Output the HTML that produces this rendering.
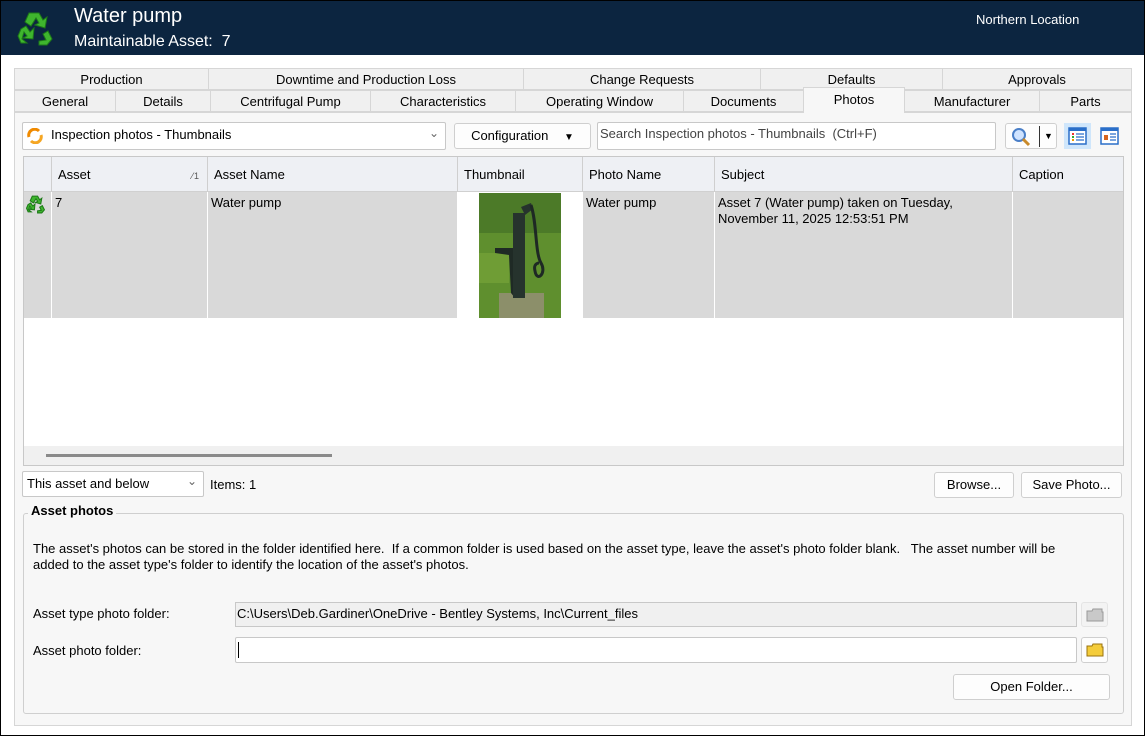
<!DOCTYPE html>
<html><head><meta charset="utf-8"><style>
*{box-sizing:border-box;margin:0;padding:0}
body{width:1145px;height:736px;overflow:hidden;background:#fff;font-family:"Liberation Sans",sans-serif;font-size:13px;color:#000;position:relative}
.a{position:absolute}
.frame{left:0;top:0;width:1145px;height:736px;border:1px solid #000}
.hdr{left:1px;top:1px;width:1143px;height:54px;background:#0c2540;color:#fff}
.tab{position:absolute;height:22px;border:1px solid #d6d6d6;background:#f0f0f0;text-align:center;line-height:21px;font-size:13px}
.panel{left:14px;top:112px;width:1118px;height:614px;background:#f7f7f7;border:1px solid #d6d6d6}
.box{position:absolute;background:#fff;border:1px solid #c8c8c8;border-radius:2px}
.btn{position:absolute;background:#fdfdfd;border:1px solid #cfcfcf;border-radius:3px;text-align:center;line-height:24px}
.th{position:absolute;top:0;height:35px;line-height:35px;padding-left:6px;border-right:1px solid #cfcfcf}
.td{position:absolute;top:35px;height:126px;padding:3px 3px;border-right:1px solid #fff;line-height:16px}
</style></head><body>
<div class="a frame"></div>
<div class="a hdr">
 <svg class="a" style="left:16px;top:8px" width="38" height="38" viewBox="0 0 38 38">
  <g fill="#3fb52e" stroke="#1d7a18" stroke-width="1">
   <path d="M12 4 L22 4 L26 11 L30 8 L28 19 L18 16 L22 14 L19 9 L14 17 L8 13 Z"/>
   <path d="M31 22 L35 30 L30 36 L22 36 L22 32 L29 31 L26 25 Z"/>
   <path d="M4 20 L9 17 L13 23 L17 19 L16 30 L6 29 L10 27 L7 23 L5 30 L10 34 L4 34 L1 27 Z"/>
  </g>
 </svg>
 <div class="a" style="left:73px;top:4px;font-size:20px">Water pump</div>
 <div class="a" style="left:73px;top:32px;font-size:16px">Maintainable Asset:&nbsp; 7</div>
 <div class="a" style="left:975px;top:11px;font-size:13px">Northern Location</div>
</div>
<div class="tab" style="left:14px;top:68px;width:195px">Production</div>
<div class="tab" style="left:208px;top:68px;width:316px">Downtime and Production Loss</div>
<div class="tab" style="left:523px;top:68px;width:238px">Change Requests</div>
<div class="tab" style="left:760px;top:68px;width:183px">Defaults</div>
<div class="tab" style="left:942px;top:68px;width:190px">Approvals</div>
<div class="tab" style="left:14px;top:90px;width:102px">General</div>
<div class="tab" style="left:115px;top:90px;width:96px">Details</div>
<div class="tab" style="left:210px;top:90px;width:161px">Centrifugal Pump</div>
<div class="tab" style="left:370px;top:90px;width:146px">Characteristics</div>
<div class="tab" style="left:515px;top:90px;width:169px">Operating Window</div>
<div class="tab" style="left:683px;top:90px;width:121px">Documents</div>
<div class="tab" style="left:904px;top:90px;width:136px">Manufacturer</div>
<div class="tab" style="left:1039px;top:90px;width:93px">Parts</div>
<div class="a panel"></div>
<div class="tab" style="left:803px;top:87px;width:102px;height:26px;background:#f7f7f7;border-bottom:none;line-height:23px">Photos</div>
<div class="box" style="left:22px;top:122px;width:424px;height:28px">
 <svg class="a" style="left:3px;top:5px" width="18" height="16" viewBox="0 0 18 16"><path d="M3 9 A6 6 0 0 1 13 3" stroke="#f08a00" stroke-width="3" fill="none"/><path d="M15 7 A6 6 0 0 1 5 13" stroke="#f5a623" stroke-width="3" fill="none"/></svg>
 <span class="a" style="left:28px;top:4px">Inspection photos - Thumbnails</span>
 <span class="a" style="right:6px;top:3px;color:#666;font-size:12px">&#8964;</span>
</div>
<div class="btn" style="left:454px;top:123px;width:137px;height:26px">Configuration <span style="font-size:10px;margin-left:12px">&#9660;</span></div>
<div class="box" style="left:597px;top:122px;width:399px;height:28px;color:#444"><span class="a" style="left:2px;top:3px">Search Inspection photos - Thumbnails&nbsp; (Ctrl+F)</span></div>
<div class="btn" style="left:1005px;top:123px;width:52px;height:26px">
 <svg class="a" style="left:5px;top:3px" width="22" height="20" viewBox="0 0 22 20"><circle cx="8" cy="8" r="6" fill="#cfe3ff" stroke="#4a7fc8" stroke-width="2"/><path d="M12 12 L18 18" stroke="#c98a2a" stroke-width="3"/></svg>
 <div class="a" style="left:33px;top:2px;width:1px;height:21px;background:#333"></div>
 <span class="a" style="left:38px;top:0px;font-size:9px">&#9660;</span>
</div>
<div class="a" style="left:1064px;top:123px;width:27px;height:26px;background:#cfe6fb"></div>
<svg class="a" style="left:1068px;top:127px" width="19" height="18" viewBox="0 0 19 18"><rect x="1" y="1" width="17" height="16" fill="#fff" stroke="#2a6fc9" stroke-width="1.5"/><rect x="1" y="1" width="17" height="3" fill="#2a6fc9"/><rect x="4" y="6" width="2" height="2" fill="#e33"/><rect x="4" y="9" width="2" height="2" fill="#3a3"/><rect x="4" y="12" width="2" height="2" fill="#e90"/><path d="M8 7h8M8 10h8M8 13h8" stroke="#2a6fc9" stroke-width="1.3"/></svg>
<svg class="a" style="left:1100px;top:127px" width="19" height="18" viewBox="0 0 19 18"><rect x="1" y="1" width="17" height="16" fill="#fff" stroke="#2a6fc9" stroke-width="1.5"/><rect x="1" y="1" width="17" height="3" fill="#2a6fc9"/><rect x="4" y="8" width="4" height="5" fill="#d7641c"/><path d="M10 7h6M10 10h6M10 13h6" stroke="#2a6fc9" stroke-width="1.3"/></svg>
<div class="a" style="left:23px;top:156px;width:1101px;height:310px;background:#fff;border:1px solid #c8c8c8;overflow:hidden">
 <div class="a" style="left:0;top:0;width:1101px;height:35px;background:#eef0f4;border-bottom:1px solid #d0d0d0"></div>
 <div class="th" style="left:0;width:28px;padding:0"></div>
 <div class="th" style="left:28px;width:156px">Asset<span class="a" style="right:8px;top:2px;font-size:9px;color:#555">&#x2044;&#8202;1</span></div>
 <div class="th" style="left:184px;width:250px">Asset Name</div>
 <div class="th" style="left:434px;width:125px">Thumbnail</div>
 <div class="th" style="left:559px;width:132px">Photo Name</div>
 <div class="th" style="left:691px;width:298px">Subject</div>
 <div class="th" style="left:989px;width:112px;border:none">Caption</div>
 <div class="a" style="left:0;top:35px;width:1101px;height:126px;background:#d9d9d9"></div>
 <svg class="a" style="left:2px;top:37px" width="20" height="20" viewBox="0 0 38 38"><g fill="#3fb52e" stroke="#1d7a18" stroke-width="2"><path d="M12 4 L22 4 L26 11 L30 8 L28 19 L18 16 L22 14 L19 9 L14 17 L8 13 Z"/><path d="M31 22 L35 30 L30 36 L22 36 L22 32 L29 31 L26 25 Z"/><path d="M4 20 L9 17 L13 23 L17 19 L16 30 L6 29 L10 27 L7 23 L5 30 L10 34 L4 34 L1 27 Z"/></g></svg>
 <div class="a" style="left:27px;top:35px;width:1px;height:126px;background:#fff"></div>
 <div class="td" style="left:28px;width:156px">7</div>
 <div class="td" style="left:184px;width:250px">Water pump</div>
 <div class="a" style="left:434px;top:35px;width:125px;height:126px;background:#fff"></div>
 <svg class="a" style="left:455px;top:36px" width="82" height="125" viewBox="0 0 82 125">
  <rect width="82" height="125" fill="#5f8f2e"/>
  <rect y="0" width="82" height="40" fill="#4c7a28"/>
  <rect x="0" y="60" width="30" height="30" fill="#7aa63a" opacity=".6"/>
  <rect x="20" y="100" width="45" height="25" fill="#8c8f6a"/>
  <path d="M36 105 L36 55 L16 55 L16 60 L30 62 L32 100 Z" fill="#1f2a25"/>
  <rect x="34" y="20" width="12" height="85" fill="#26332d"/>
  <path d="M42 14 L52 10 L54 16 L46 22 Z" fill="#26332d"/>
  <path d="M52 12 C58 30 56 60 62 70 C68 80 58 90 56 78 C54 70 60 70 60 70" stroke="#1e2824" stroke-width="3" fill="none"/>
 </svg>
 <div class="td" style="left:559px;width:132px">Water pump</div>
 <div class="td" style="left:691px;width:298px">Asset 7 (Water pump) taken on Tuesday, November 11, 2025 12:53:51 PM</div>
 <div class="td" style="left:989px;width:112px"></div>
 <div class="a" style="left:0;top:289px;width:1101px;height:21px;background:#f0f0f0"></div>
 <div class="a" style="left:22px;top:297px;width:286px;height:3px;background:#8a8a8a"></div>
</div>
<div class="box" style="left:22px;top:471px;width:182px;height:26px"><span class="a" style="left:4px;top:4px">This asset and below</span><span class="a" style="right:6px;top:2px;color:#666;font-size:12px">&#8964;</span></div>
<div class="a" style="left:210px;top:477px">Items: 1</div>
<div class="btn" style="left:934px;top:472px;width:80px;height:26px">Browse...</div>
<div class="btn" style="left:1021px;top:472px;width:101px;height:26px">Save Photo...</div>
<div class="a" style="left:23px;top:513px;width:1101px;height:201px;border:1px solid #cfcfcf;border-radius:3px"></div>
<div class="a" style="left:28px;top:503px;background:#f7f7f7;padding:0 3px;font-weight:bold">Asset photos</div>
<div class="a" style="left:33px;top:541px;width:1085px;line-height:16px;font-size:13px">The asset's photos can be stored in the folder identified here.&nbsp; If a common folder is used based on the asset type, leave the asset's photo folder blank.&nbsp;&nbsp; The asset number will be<br>added to the asset type's folder to identify the location of the asset's photos.</div>
<div class="a" style="left:33px;top:606px">Asset type photo folder:</div>
<div class="a" style="left:235px;top:602px;width:842px;height:25px;background:#f0f0f0;border:1px solid #c8c8c8;padding:3px 1px">C:\Users\Deb.Gardiner\OneDrive - Bentley Systems, Inc\Current_files</div>
<div class="a" style="left:33px;top:643px">Asset photo folder:</div>
<div class="box" style="left:235px;top:637px;width:842px;height:26px"><div class="a" style="left:2px;top:4px;width:1px;height:16px;background:#000"></div></div>
<div class="btn" style="left:1081px;top:602px;width:27px;height:25px;background:#f3f3f3;border-color:#e4e4e4"><svg style="margin-top:5px" width="18" height="14" viewBox="0 0 18 14"><path d="M1 3 L6 3 L7 1 L16 1 L16 4 L17 4 L17 13 L1 13 Z" fill="#c9c9c9" stroke="#999"/></svg></div>
<div class="btn" style="left:1081px;top:637px;width:27px;height:26px"><svg style="margin-top:5px" width="18" height="14" viewBox="0 0 18 14"><path d="M1 3 L6 3 L7 1 L16 1 L16 4 L17 4 L17 13 L1 13 Z" fill="#f4cc3a" stroke="#9a7310"/></svg></div>
<div class="btn" style="left:953px;top:674px;width:157px;height:26px">Open Folder...</div>
</body></html>
